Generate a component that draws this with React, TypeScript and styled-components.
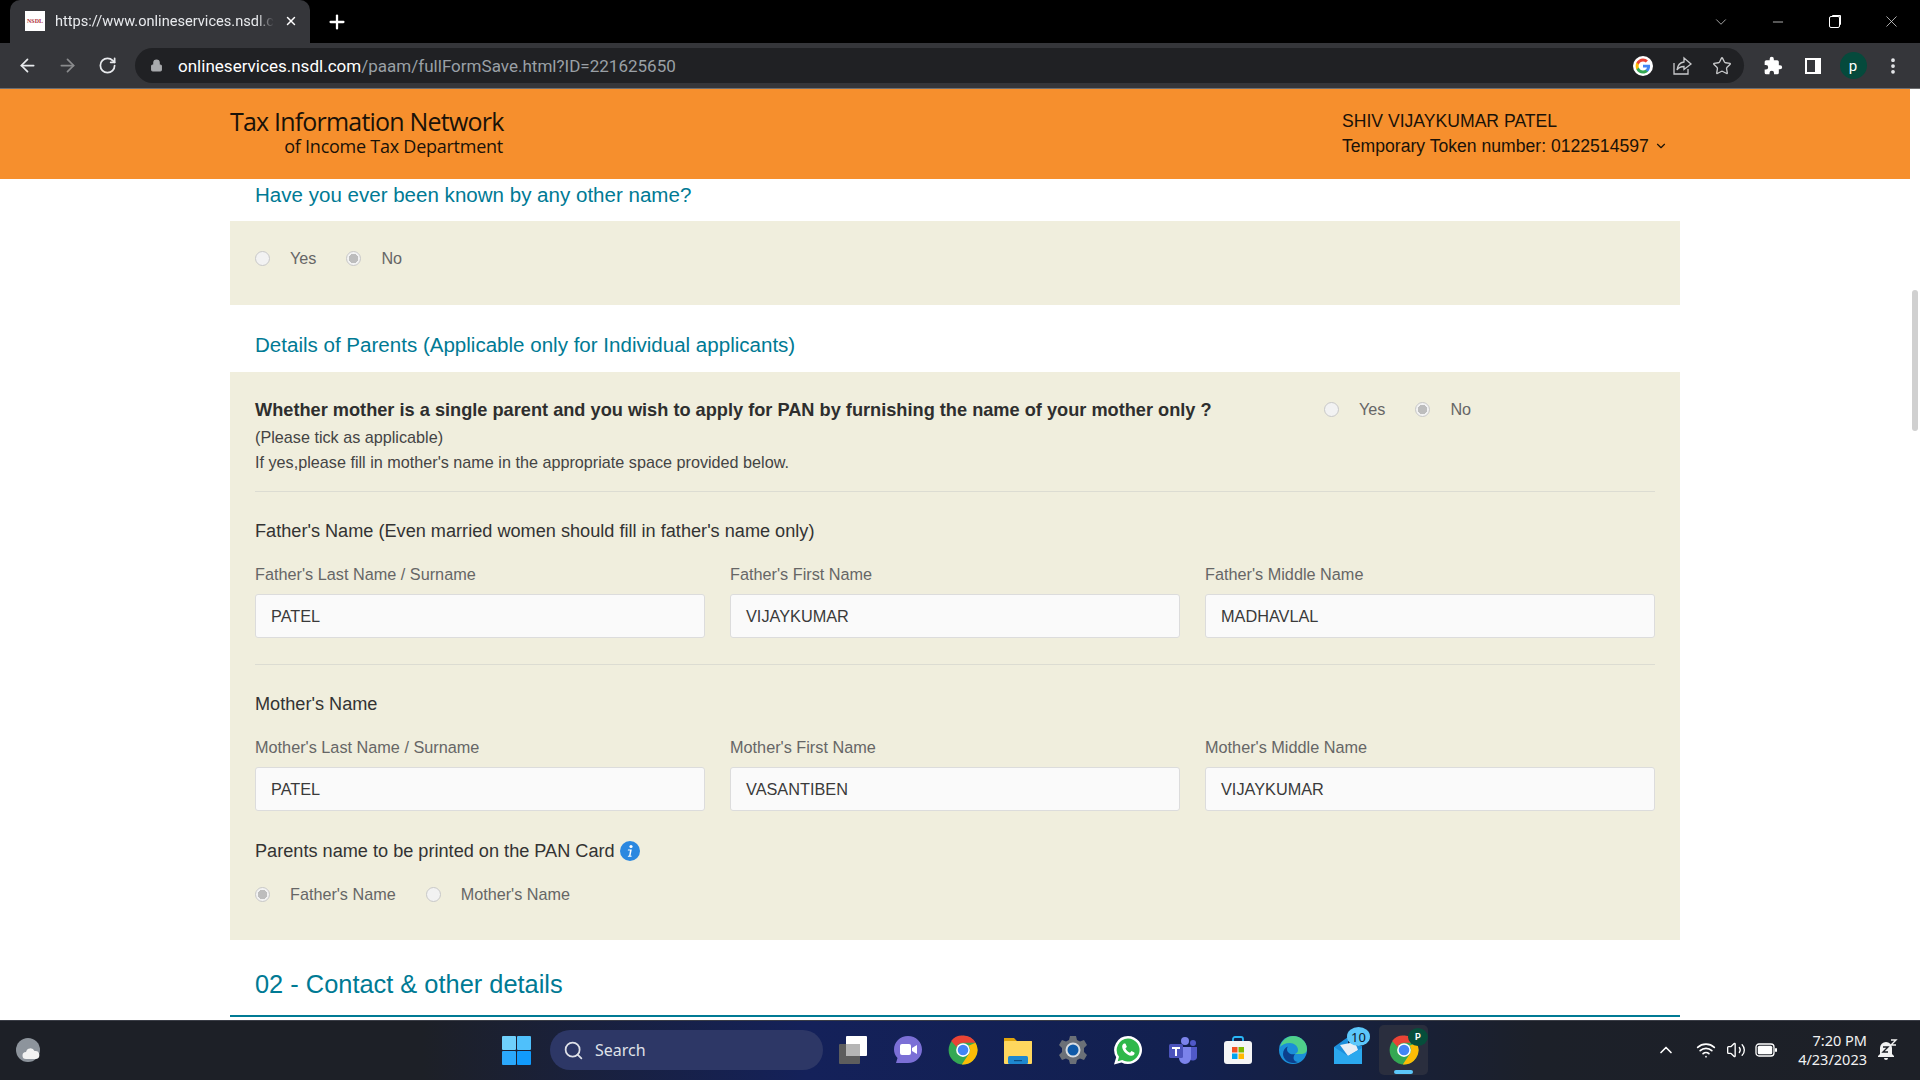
import { createGlobalStyle, styled } from "styled-components";
import { ArrowLeft, ArrowRight, ChevronDown, ChevronUp, Lock, MoreVertical, Plus, RotateCw, Search, Star, Volume2, Wifi, X, Minus } from "lucide-react";

const GlobalStyle = createGlobalStyle`
  html, body { margin: 0; padding: 0; background: #fff; }
  * { box-sizing: border-box; }
  body { font-family: "Liberation Sans", Arial, sans-serif; }
`;

const Screen = styled.div`
  width: 1920px;
  height: 1080px;
  overflow: hidden;
  display: flex;
  flex-direction: column;
`;

/* browser chrome */
const TabStrip = styled.div`
  height: 43px;
  background: #000;
  display: flex;
  align-items: flex-end;
  padding-left: 10px;
  color: #fff;
`;

const Tab = styled.div`
  width: 300px;
  height: 43px;
  background: #35363a;
  border-radius: 10px 10px 0 0;
  display: flex;
  align-items: center;
  padding: 0 12px 2px 15px;
  gap: 10px;
`;

const Favicon = styled.div`
  width: 20px;
  height: 20px;
  background: #fff;
  color: #b0323c;
  font: bold 6px "Liberation Serif", serif;
  display: flex;
  align-items: center;
  justify-content: center;
  flex-shrink: 0;
`;

const TabTitle = styled.div`
  flex: 1;
  white-space: nowrap;
  font: 14.6px Roboto, sans-serif;
  color: #e8eaed;
  mask-image: linear-gradient(to right, #000 92%, transparent);
`;

const NewTab = styled.div`
  margin-left: 16px;
  height: 43px;
  display: flex;
  align-items: center;
`;

const WindowControls = styled.div`
  margin-left: auto;
  height: 43px;
  display: flex;
  align-items: center;
  color: #d8d8d8;
`;

const WindowButton = styled.div`
  width: 57px;
  display: flex;
  justify-content: center;
`;

const RestoreIcon = styled.div`
  width: 11px;
  height: 12px;
  border: 1px solid #fff;
  border-radius: 2px;
  box-shadow: 2px -2px 0 -1px #fff;
`;

const Toolbar = styled.div`
  height: 46px;
  background: #35363a;
  border-bottom: 1px solid #6d6e70;
  display: flex;
  align-items: center;
  padding-left: 17px;
  color: #e8eaed;
`;

const NavButton = styled.div<{ $dim?: boolean; $w: number }>`
  width: ${(p) => p.$w}px;
  display: flex;
  align-items: center;
  color: ${(p) => (p.$dim ? "#8a8b8d" : "#e8eaed")};
`;

const Omnibox = styled.div`
  margin-left: 9px;
  width: 1609px;
  height: 35px;
  border-radius: 18px;
  background: #202124;
  display: flex;
  align-items: center;
  padding: 0 12px 0 15px;
  gap: 15px;
`;

const UrlText = styled.div`
  flex: 1;
  font: 17.05px Roboto, sans-serif;
  color: #9aa0a6;
  b { font-weight: 400; color: #fff; }
`;

const OmniIcons = styled.div`
  display: flex;
  align-items: center;
  gap: 19px;
  color: #c8c9cb;
`;

const ToolIcons = styled.div`
  display: flex;
  align-items: center;
  margin-left: 9px;
`;

const ToolSlot = styled.div`
  width: 40px;
  display: flex;
  justify-content: center;
  align-items: center;
`;

const Avatar = styled.div`
  width: 27px;
  height: 27px;
  border-radius: 50%;
  background: #054a3c;
  color: #fff;
  font: 15px Roboto, sans-serif;
  display: flex;
  align-items: center;
  justify-content: center;
`;

/* page */
const Viewport = styled.div`
  flex: 1;
  min-height: 0;
  display: flex;
  overflow: hidden;
`;

const Page = styled.div`
  flex: 1;
  min-width: 0;
`;

const Scrollbar = styled.div`
  width: 10px;
  background: #fff;
  padding: 201px 2px 0;
`;

const Thumb = styled.div`
  height: 141px;
  background: #d0d0d0;
  border-radius: 3px;
`;

const OrangeBar = styled.header`
  height: 90px;
  background: #f68f2d;
  display: flex;
  align-items: center;
  justify-content: space-between;
  padding: 0 0 1px 230px;
`;

const Logo = styled.div`
  width: 273px;
  text-align: right;
  color: #1a1208;
  font-family: "Open Sans", sans-serif;
  margin-top: -3px;
`;

const LogoTop = styled.div`
  font-size: 25px;
  font-weight: 500;
  line-height: 28px;
  letter-spacing: -0.8px;
  white-space: nowrap;
`;

const LogoBottom = styled.div`
  font-size: 18px;
  font-weight: 500;
  line-height: 22px;
  letter-spacing: -0.25px;
  white-space: nowrap;
`;

const UserBlock = styled.div`
  width: 568px;
  font-size: 17.6px;
  line-height: 25px;
  color: #1a1208;
`;

const TokenLine = styled.div`
  display: flex;
  align-items: center;
  gap: 5px;
`;

const Content = styled.div`
  width: 1450px;
  margin-left: 230px;
`;

const SubHeading = styled.h3<{ $top: number; $bottom: number }>`
  margin: ${(p) => p.$top}px 0 ${(p) => p.$bottom}px;
  padding-left: 25px;
  font-weight: 400;
  font-size: 20.55px;
  line-height: 24px;
  color: #007a94;
`;

const Panel = styled.section<{ $pad: string }>`
  background: #f0eedd;
  padding: ${(p) => p.$pad};
`;

const RadioRow = styled.div`
  display: flex;
  align-items: center;
`;

const RadioItem = styled.label<{ $gap: number }>`
  display: flex;
  align-items: center;
  margin-right: ${(p) => p.$gap}px;
  font-size: 16.2px;
  color: #666;
  line-height: 20px;
`;

const RadioDot = styled.span<{ $on?: boolean }>`
  width: 15px;
  height: 15px;
  border-radius: 50%;
  border: 1px solid #c8c8c8;
  background: ${(p) => (p.$on ? "radial-gradient(circle, #bdbdbd 0 4.5px, #f2f2f2 5px)" : "#f2f2f2")};
  margin-right: 20px;
  flex-shrink: 0;
`;

const QuestionRow = styled.div`
  display: flex;
  justify-content: space-between;
  align-items: flex-start;
`;

const Question = styled.div`
  font-weight: 700;
  font-size: 18.2px;
  line-height: 24px;
  color: #2e2e2e;
  margin-bottom: 3px;
`;

const QuestionRadios = styled(RadioRow)`
  width: 331px;
  padding-top: 1px;
`;

const Hint = styled.div`
  font-size: 16.2px;
  line-height: 25px;
  color: #444;
`;

const Divider = styled.hr<{ $top: number }>`
  border: 0;
  border-top: 1px solid #dcdcd2;
  margin: ${(p) => p.$top}px 0 0;
`;

const GroupTitle = styled.div<{ $top: number; $bottom: number }>`
  font-size: 18.15px;
  line-height: 24px;
  color: #333;
  display: flex;
  align-items: center;
  gap: 5px;
  margin: ${(p) => p.$top}px 0 ${(p) => p.$bottom}px;
`;

const FieldGrid = styled.div`
  display: grid;
  grid-template-columns: repeat(3, 1fr);
  column-gap: 25px;
`;

const FieldLabel = styled.label`
  display: block;
  font-size: 16.25px;
  line-height: 20px;
  color: #666;
  margin-bottom: 10px;
`;

const FieldBox = styled.div`
  height: 44px;
  background: #fafafa;
  border: 1px solid #dcdcdc;
  border-radius: 3px;
  padding: 0 15px;
  display: flex;
  align-items: center;
  font-size: 16.3px;
  color: #3a3a3a;
`;

const SectionTitle = styled.h2`
  margin: 29px 0 0;
  padding-left: 25px;
  font-weight: 400;
  font-size: 25.4px;
  line-height: 30px;
  color: #007a94;
  height: 48px;
  border-bottom: 2px solid #007a94;
`;

/* taskbar */
const Taskbar = styled.footer`
  height: 60px;
  flex-shrink: 0;
  border-top: 1px solid #3a3d46;
  padding-bottom: 1px;
  background: linear-gradient(90deg, #1d2027 0 22%, #14215a 42%, #12204f 62%, #1c2029 80%, #1d2027 100%);
  display: grid;
  grid-template-columns: 502px auto 1fr;
  align-items: center;
  color: #fff;
`;

const TaskLeft = styled.div`
  padding-left: 15px;
  display: flex;
`;

const TaskCenter = styled.div`
  display: flex;
  align-items: center;
`;

const SearchPill = styled.div`
  margin: 0 2px 0 19px;
  width: 273px;
  height: 40px;
  border-radius: 20px;
  background: #2d3766;
  display: flex;
  align-items: center;
  gap: 11px;
  padding-left: 13px;
  font: 16px "Noto Sans", sans-serif;
  color: #dfe1e8;
`;

const TaskSlot = styled.div<{ $active?: boolean }>`
  width: ${(p) => (p.$active ? 49 : 55)}px;
  margin: ${(p) => (p.$active ? "0 2px 0 4px" : "0")};
  height: 50px;
  display: flex;
  align-items: center;
  justify-content: center;
  position: relative;
  border-radius: 5px;
  background: ${(p) => (p.$active ? "#2a2e3e" : "transparent")};
`;

const ActiveLine = styled.span`
  position: absolute;
  bottom: 1px;
  left: 15px;
  width: 19px;
  height: 4px;
  border-radius: 2px;
  background: #5cc7fa;
`;

const Badge = styled.span`
  position: absolute;
  top: 2px;
  right: 5px;
  width: 23px;
  height: 19px;
  border-radius: 50%;
  background: #5cc7fa;
  color: #10182c;
  font: 13px "Noto Sans", sans-serif;
  display: flex;
  align-items: center;
  justify-content: center;
`;

const MiniAvatar = styled.span`
  position: absolute;
  top: 3px;
  right: 0;
  width: 20px;
  height: 18px;
  border-radius: 50%;
  background: #064e3b;
  color: #fff;
  font: bold 9px Roboto, sans-serif;
  display: flex;
  align-items: center;
  justify-content: center;
`;

const Tray = styled.div`
  justify-self: end;
  display: flex;
  align-items: center;
  padding-right: 22px;
`;

const TrayIcons = styled.div`
  display: flex;
  align-items: center;
  margin-right: 21px;
  svg:nth-child(2) { margin: 0 10px 0 20px; }
  svg:nth-child(3) { margin-right: 9px; }
`;

const Clock = styled.div`
  font: 14.5px/19px "Noto Sans", sans-serif;
  text-align: right;
  margin-right: 11px;
  color: #f2f2f2;
`;

const GoogleIcon = () => (
  <svg width="20" height="20" viewBox="0 0 48 48">
    <circle cx="24" cy="24" r="24" fill="#fff" />
    <path fill="#4285f4" d="M41 24.5c0-1.300-.1-2.500-.3-3.600H24v6.900h9.600c-.4 2.200-1.700 4.100-3.500 5.300v4.400h5.700C39.100 34.400 41 29.900 41 24.500z" />
    <path fill="#34a853" d="M24 42c4.800 0 8.800-1.600 11.800-4.400l-5.700-4.400c-1.600 1.100-3.600 1.700-6.100 1.700-4.600 0-8.500-3.100-9.900-7.300H8.200v4.600C11.100 38 17.100 42 24 42z" />
    <path fill="#fbbc05" d="M14.100 27.600c-.4-1.100-.6-2.300-.6-3.600s.2-2.500.6-3.600v-4.600H8.200C7 18.200 6.300 21 6.300 24s.7 5.800 1.900 8.200l5.900-4.600z" />
    <path fill="#ea4335" d="M24 13.100c2.600 0 5 .9 6.800 2.700l5.100-5.100C32.800 7.800 28.800 6 24 6 17.100 6 11.100 10 8.200 15.800l5.900 4.600c1.400-4.200 5.300-7.300 9.900-7.300z" />
  </svg>
);

const ShareIcon = () => (
  <svg width="21" height="20" viewBox="0 0 21 20" fill="none" stroke="#c8c9cb" strokeWidth="1.300">
    <path d="M2 7v11h14v-5" />
    <path d="M12 2l7 6-7 5.500V10.500c-3 0-5.500 1-7 3.500 .5-4 3-7.500 7-8z" />
  </svg>
);

const PuzzleIcon = () => (
  <svg width="20" height="20" viewBox="0 0 24 24" fill="#fff">
    <path d="M20.500 11H19V7a2 2 0 0 0-2-2h-4V3.500a2.500 2.500 0 0 0-5 0V5H4a2 2 0 0 0-2 2v3.800h1.500a2.700 2.700 0 0 1 0 5.400H2V20a2 2 0 0 0 2 2h3.800v-1.500a2.700 2.700 0 0 1 5.400 0V22H17a2 2 0 0 0 2-2v-4h1.500a2.500 2.500 0 0 0 0-5z" />
  </svg>
);

const SidePanelIcon = () => (
  <svg width="18" height="18" viewBox="0 0 18 18">
    <rect x="1" y="1" width="16" height="16" fill="#fff" />
    <rect x="3" y="3" width="8" height="12" fill="#35363a" />
  </svg>
);

const WeatherIcon = () => (
  <svg width="26" height="26" viewBox="0 0 26 26">
    <circle cx="13" cy="13" r="12" fill="#8d949c" />
    <path fill="#f2f2f2" d="M11 22a3.500 3.500 0 0 1 0-7 4.500 4.500 0 0 1 8.500-1 4 4 0 0 1 1.500 8z" />
  </svg>
);

const WindowsLogo = () => (
  <svg width="29" height="29" viewBox="0 0 29 29">
    <rect width="14" height="14" rx="1" fill="#6fd0fb" />
    <rect x="15" width="14" height="14" rx="1" fill="#4fc0fb" />
    <rect y="15" width="14" height="14" rx="1" fill="#2ba8fb" />
    <rect x="15" y="15" width="14" height="14" rx="1" fill="#119afb" />
  </svg>
);

const FilesIcon = () => (
  <svg width="30" height="30" viewBox="0 0 30 30">
    <rect x="1" y="9" width="21" height="20" rx="1" fill="#5d5d5d" />
    <rect x="8" y="1" width="21" height="20" rx="1" fill="#fff" />
    <rect x="8" y="9" width="14" height="12" fill="#b5b5b5" />
  </svg>
);

const MeetIcon = () => (
  <svg width="30" height="30" viewBox="0 0 30 30">
    <path fill="#7b6fd6" d="M15 1c8 0 14 6 14 13.500S23 28 15 28H3l1.500-5C2 20.500 1 17.500 1 14.500 1 7 7 1 15 1z" />
    <rect x="7" y="9" width="11" height="11" rx="2" fill="#fff" />
    <path fill="#fff" d="M19 13l5-3v9l-5-3z" />
  </svg>
);

const ChromeIcon = ({ size = 30 }: { size?: number }) => (
  <svg width={size} height={size} viewBox="0 0 48 48">
    <circle cx="24" cy="24" r="23" fill="#34a853" />
    <path fill="#ea4335" d="M24 1a23 23 0 0 1 20 11.500H24A11.500 11.500 0 0 0 13.800 19L5 9.500A23 23 0 0 1 24 1z" />
    <path fill="#fbbc05" d="M44 12.500A23 23 0 0 1 22 47l11.500-17A11.500 11.500 0 0 0 33 17z" />
    <circle cx="24" cy="24" r="11" fill="#fff" />
    <circle cx="24" cy="24" r="8.500" fill="#4285f4" />
  </svg>
);

const FolderIcon = () => (
  <svg width="30" height="30" viewBox="0 0 30 30">
    <path fill="#e0a40d" d="M1 3h10l3 3h15v6H1z" />
    <rect x="1" y="6" width="28" height="23" rx="1" fill="#ffd75e" />
    <rect x="5" y="21" width="20" height="8" rx="1.500" fill="#1e88d0" />
    <rect x="11" y="25" width="8" height="1.200" fill="#0d4d80" />
  </svg>
);

const GearIcon = () => (
  <svg width="30" height="30" viewBox="0 0 30 30">
    <path fill="#6b7077" d="M12 1h6l1 4 3 1.500 4-1.500 3 5-3 3v4l3 3-3 5-4-1.500-3 1.500-1 4h-6l-1-4-3-1.500-4 1.500-3-5 3-3v-4l-3-3 3-5 4 1.500 3-1.500z" />
    <circle cx="15" cy="15" r="7.500" fill="#d8dde2" />
    <circle cx="15" cy="15" r="5.500" fill="#0f5aa8" />
  </svg>
);

const WhatsappIcon = () => (
  <svg width="30" height="30" viewBox="0 0 30 30">
    <path fill="#fff" d="M15 1a14 14 0 1 1-6.500 26.400L1 29.500l2.200-7.300A14 14 0 0 1 15 1z" />
    <path fill="#2fb84a" d="M15 3.500a11.500 11.500 0 1 1-5.800 21.400l-4.500 1.300 1.300-4.400A11.500 11.500 0 0 1 15 3.500z" />
    <path fill="#fff" d="M11 8.500c-1 .3-2 1.800-1.800 3.500.4 4 4.800 8.300 8.800 8.800 1.700.2 3.200-.8 3.500-2 .2-.7.100-1.200-.2-1.400l-2.800-1.300-1.500 1.700c-2-.7-3.800-2.500-4.600-4.500l1.500-1.400-1.200-3c-.3-.4-1.100-.5-1.700-.4z" />
  </svg>
);

const TeamsIcon = () => (
  <svg width="30" height="30" viewBox="0 0 30 30">
    <circle cx="17" cy="6" r="4" fill="#7b83eb" />
    <circle cx="25" cy="8" r="3" fill="#5059c9" />
    <path fill="#5059c9" d="M20 12h9v9a4 4 0 0 1-8 1z" />
    <path fill="#7b83eb" d="M9 12h14v11a6 6 0 0 1-12 0z" />
    <rect x="1" y="9" width="14" height="14" rx="1.500" fill="#4b53bc" />
    <path fill="#fff" d="M4 12h8v2h-3v7H7v-7H4z" />
  </svg>
);

const StoreIcon = () => (
  <svg width="30" height="30" viewBox="0 0 30 30">
    <path fill="none" stroke="#29b6f6" strokeWidth="1.800" d="M10 8V4a2 2 0 0 1 2-2h6a2 2 0 0 1 2 2v4" />
    <rect x="1" y="6" width="28" height="23" rx="3" fill="#f5f5f5" />
    <rect x="9" y="12" width="5.500" height="5.500" fill="#f25022" />
    <rect x="15.500" y="12" width="5.500" height="5.500" fill="#7fba00" />
    <rect x="9" y="18.500" width="5.500" height="5.500" fill="#00a4ef" />
    <rect x="15.500" y="18.500" width="5.500" height="5.500" fill="#ffb900" />
  </svg>
);

const EdgeIcon = () => (
  <svg width="30" height="30" viewBox="0 0 30 30">
    <circle cx="15" cy="15" r="14" fill="#1b8fd8" />
    <path fill="#4fd08a" d="M2 12C4 5 9 1 15 1c8 0 14 6 14 13 0 4-3 5-6 5h-6c2-1 3-2 3-4 0-4-4-7-8-7-5 0-8 2-10 4z" />
    <path fill="#0c3f8c" d="M17 19c-4 1-8-1-8-5 0-1 .5-2 1-2.500-3 1-5 4-5 7.500 0 5 5 9 10 9 2 0 4-.5 5-1-4 0-6-4-3-8z" />
  </svg>
);

const MailIcon = () => (
  <svg width="30" height="30" viewBox="0 0 30 30">
    <path fill="#1c8fdc" d="M1 12L15 2v8l14 1v18H1z" />
    <path fill="#e8eef5" d="M7 10l15-3 3 8-10 6z" />
    <path fill="#2ba8ee" d="M1 12l14 9 14-8v16H1z" />
  </svg>
);

const BatteryIcon = () => (
  <svg width="22" height="14" viewBox="0 0 22 14">
    <rect x="1" y="1" width="18" height="12" rx="3" fill="none" stroke="#fff" strokeWidth="1.300" />
    <rect x="2.800" y="2.800" width="14.400" height="8.400" rx="1.500" fill="#fff" />
    <rect x="20" y="5" width="2" height="4" rx="1" fill="#fff" />
  </svg>
);

const BellIcon = () => (
  <svg width="20" height="22" viewBox="0 0 20 22">
    <path fill="#f2f2f2" d="M8 3a6 6 0 0 0-6 6v6l-2 2v1h16v-1l-2-2V9a6 6 0 0 0-6-6z" />
    <path fill="#f2f2f2" d="M6 19h4a2 2 0 0 1-4 0z" />
    <path fill="none" stroke="#1d2027" strokeWidth="1.400" d="M5 8h5l-5 5h5" />
    <path fill="none" stroke="#f2f2f2" strokeWidth="1.400" d="M13 1h5l-5 5h5" />
  </svg>
);

const InfoIcon = () => (
  <svg width="20" height="20" viewBox="0 0 20 20">
    <circle cx="10" cy="10" r="10" fill="#2b88e0" />
    <circle cx="11" cy="5.500" r="1.600" fill="#fff" />
    <path fill="#fff" d="M8 8.500h3.800l-1.300 6.200h1.200l-.2 1H7.800l.2-1h1.100l.9-5.200H7.800z" />
  </svg>
);

const Field = ({ label, value }: { label: string; value: string }) => (
  <div>
    <FieldLabel>{label}</FieldLabel>
    <FieldBox>{value}</FieldBox>
  </div>
);

const taskIcons = [FilesIcon, MeetIcon, ChromeIcon, FolderIcon, GearIcon, WhatsappIcon, TeamsIcon, StoreIcon, EdgeIcon];

export default function App() {
  return (
    <Screen>
      <GlobalStyle />
      <TabStrip>
        <Tab>
          <Favicon>NSDL</Favicon>
          <TabTitle>https://www.onlineservices.nsdl.c</TabTitle>
          <X size={16} strokeWidth={2.5} />
        </Tab>
        <NewTab>
          <Plus size={22} strokeWidth={2.5} />
        </NewTab>
        <WindowControls>
          <WindowButton><ChevronDown size={18} strokeWidth={1} /></WindowButton>
          <WindowButton><Minus size={16} strokeWidth={1.2} /></WindowButton>
          <WindowButton><RestoreIcon /></WindowButton>
          <WindowButton><X size={19} strokeWidth={1} /></WindowButton>
        </WindowControls>
      </TabStrip>
      <Toolbar>
        <NavButton $w={40}><ArrowLeft size={21} strokeWidth={2} /></NavButton>
        <NavButton $w={41} $dim><ArrowRight size={21} strokeWidth={2} /></NavButton>
        <NavButton $w={28}><RotateCw size={19} strokeWidth={2.2} /></NavButton>
        <Omnibox>
          <Lock size={13} fill="#a9abae" color="#a9abae" />
          <UrlText><b>onlineservices.nsdl.com</b>/paam/fullFormSave.html?ID=221625650</UrlText>
          <OmniIcons>
            <GoogleIcon />
            <ShareIcon />
            <Star size={20} strokeWidth={1.6} />
          </OmniIcons>
        </Omnibox>
        <ToolIcons>
          <ToolSlot><PuzzleIcon /></ToolSlot>
          <ToolSlot><SidePanelIcon /></ToolSlot>
          <ToolSlot><Avatar>p</Avatar></ToolSlot>
          <ToolSlot><MoreVertical size={20} strokeWidth={2.5} /></ToolSlot>
        </ToolIcons>
      </Toolbar>
      <Viewport>
        <Page>
          <OrangeBar>
            <Logo>
              <LogoTop>Tax Information Network</LogoTop>
              <LogoBottom>of Income Tax Department</LogoBottom>
            </Logo>
            <UserBlock>
              <div>SHIV VIJAYKUMAR PATEL</div>
              <TokenLine>Temporary Token number: 0122514597 <ChevronDown size={14} strokeWidth={2} /></TokenLine>
            </UserBlock>
          </OrangeBar>
          <Content>
            <SubHeading $top={4} $bottom={14}>Have you ever been known by any other name?</SubHeading>
            <Panel $pad="27px 25px 37px">
              <RadioRow>
                <RadioItem $gap={30}><RadioDot />Yes</RadioItem>
                <RadioItem $gap={0}><RadioDot $on />No</RadioItem>
              </RadioRow>
            </Panel>
            <SubHeading $top={28} $bottom={15}>Details of Parents (Applicable only for Individual applicants)</SubHeading>
            <Panel $pad="26px 25px 36px">
              <QuestionRow>
                <Question>Whether mother is a single parent and you wish to apply for PAN by furnishing the name of your mother only ?</Question>
                <QuestionRadios>
                  <RadioItem $gap={30}><RadioDot />Yes</RadioItem>
                  <RadioItem $gap={0}><RadioDot $on />No</RadioItem>
                </QuestionRadios>
              </QuestionRow>
              <Hint>(Please tick as applicable)</Hint>
              <Hint>If yes,please fill in mother's name in the appropriate space provided below.</Hint>
              <Divider $top={16} />
              <GroupTitle $top={27} $bottom={21}>Father's Name (Even married women should fill in father's name only)</GroupTitle>
              <FieldGrid>
                <Field label="Father's Last Name / Surname" value="PATEL" />
                <Field label="Father's First Name" value="VIJAYKUMAR" />
                <Field label="Father's Middle Name" value="MADHAVLAL" />
              </FieldGrid>
              <Divider $top={26} />
              <GroupTitle $top={27} $bottom={21}>Mother's Name</GroupTitle>
              <FieldGrid>
                <Field label="Mother's Last Name / Surname" value="PATEL" />
                <Field label="Mother's First Name" value="VASANTIBEN" />
                <Field label="Mother's Middle Name" value="VIJAYKUMAR" />
              </FieldGrid>
              <GroupTitle $top={28} $bottom={21}>Parents name to be printed on the PAN Card <InfoIcon /></GroupTitle>
              <RadioRow>
                <RadioItem $gap={30}><RadioDot $on />Father's Name</RadioItem>
                <RadioItem $gap={0}><RadioDot />Mother's Name</RadioItem>
              </RadioRow>
            </Panel>
            <SectionTitle>02 - Contact &amp; other details</SectionTitle>
          </Content>
        </Page>
        <Scrollbar><Thumb /></Scrollbar>
      </Viewport>
      <Taskbar>
        <TaskLeft><WeatherIcon /></TaskLeft>
        <TaskCenter>
          <WindowsLogo />
          <SearchPill><Search size={21} strokeWidth={2} />Search</SearchPill>
          {taskIcons.map((Icon, i) => (
            <TaskSlot key={i}><Icon /></TaskSlot>
          ))}
          <TaskSlot><MailIcon /><Badge>10</Badge></TaskSlot>
          <TaskSlot $active><ChromeIcon /><MiniAvatar>P</MiniAvatar><ActiveLine /></TaskSlot>
        </TaskCenter>
        <Tray>
          <TrayIcons>
            <ChevronUp size={20} strokeWidth={2} />
            <Wifi size={20} strokeWidth={2} />
            <Volume2 size={20} strokeWidth={1.6} />
            <BatteryIcon />
          </TrayIcons>
          <Clock>7:20 PM<br />4/23/2023</Clock>
          <BellIcon />
        </Tray>
      </Taskbar>
    </Screen>
  );
}
